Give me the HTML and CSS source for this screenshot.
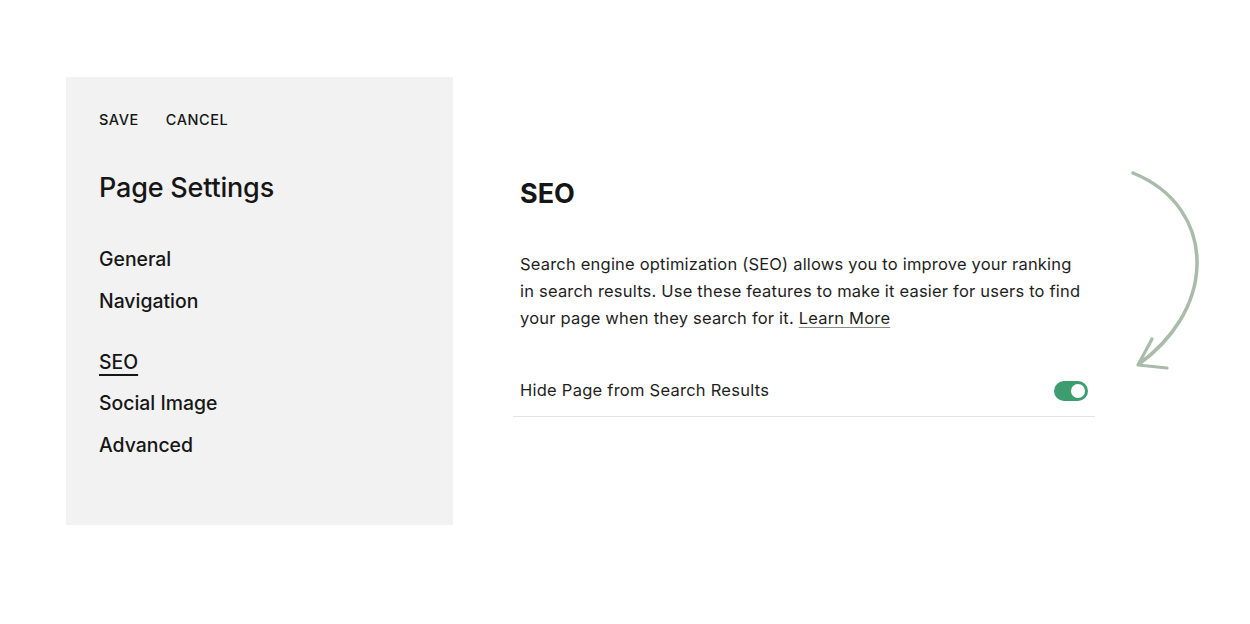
FILE: index.html
```html
<!DOCTYPE html>
<html lang="en">
<head>
<meta charset="utf-8">
<title>Page Settings</title>
<link rel="stylesheet" href="styles.css">
</head>
<body>
<div class="stage">
  <aside class="panel">
    <div class="actions">
      <span class="action">SAVE</span>
      <span class="action">CANCEL</span>
    </div>
    <h1 class="panel-title">Page Settings</h1>
    <nav class="nav">
      <span class="nav-item">General</span>
      <span class="nav-item">Navigation</span>
      <span class="nav-item active group-start">SEO</span>
      <span class="nav-item">Social Image</span>
      <span class="nav-item">Advanced</span>
    </nav>
  </aside>
  <main class="content">
    <h2 class="content-title">SEO</h2>
    <p class="desc">Search engine optimization (SEO) allows you to improve your ranking in search results. Use these features to make it easier for users to find your page when they search for it. <span class="link">Learn More</span></p>
    <div class="row">
      <span class="row-label">Hide Page from Search Results</span>
      <span class="toggle"><span class="knob"></span></span>
    </div>
  </main>
  <svg class="arrow" width="100" height="210" viewBox="1120 165 100 210" fill="none" stroke="#a9bba9" stroke-linecap="round" stroke-linejoin="round">
    <path d="M1133 173 C1175 190 1198 225 1197 265 C1196 305 1172 340 1139 364" stroke-width="3.5"/>
    <path d="M1152 339 L1138 365 L1167 368" stroke-width="3.2"/>
  </svg>
</div>
</body>
</html>
```

FILE: styles.css
```css
* { box-sizing: border-box; }
html, body { margin: 0; padding: 0; background: #ffffff; }
body {
  font-family: Inter, "Liberation Sans", sans-serif;
  color: #161616;
  width: 1250px;
  height: 624px;
  overflow: hidden;
}
.stage {
  position: relative;
  display: flex;
  align-items: flex-start;
  padding: 77px 0 0 66px;
  gap: 60px;
}
.panel {
  width: 387px;
  height: 448px;
  background: #f2f2f2;
  padding: 35px 0 0 33px;
  display: flex;
  flex-direction: column;
}
.actions {
  display: flex;
  gap: 27px;
}
.action {
  font-size: 14.5px;
  line-height: 15px;
  font-weight: 500;
  letter-spacing: 0.55px;
}
.panel-title {
  margin: 44px 0 0;
  font-size: 27px;
  line-height: 33px;
  font-weight: 500;
  letter-spacing: -0.2px;
}
.nav {
  margin-top: 43px;
  display: flex;
  flex-direction: column;
  align-items: flex-start;
  gap: 18px;
}
.nav-item {
  font-size: 19.4px;
  line-height: 24px;
  font-weight: 500;
}
.nav-item.group-start { margin-top: 19px; }
.nav-item.active {
  text-decoration: underline;
  text-decoration-thickness: 2px;
  text-underline-offset: 5px;
}
.nav-item.active + .nav-item { margin-top: -1px; }
.content {
  width: 582px;
  padding-top: 100px;
}
.content-title {
  margin: 0;
  padding-left: 7px;
  font-size: 27px;
  line-height: 33px;
  font-weight: 700;
}
.desc {
  margin: 41px 0 0;
  padding: 0 7px;
  font-size: 16.5px;
  line-height: 27px;
  letter-spacing: 0.2px;
  color: #1e1e1e;
}
.link {
  text-decoration: underline;
  text-decoration-color: #8a8a8a;
  text-decoration-thickness: 1px;
  text-underline-offset: 3px;
}
.row {
  margin-top: 33px;
  display: flex;
  align-items: center;
  justify-content: space-between;
  padding: 12px 7px 12px;
  border-bottom: 1px solid #e4e4e4;
}
.row-label {
  font-size: 16.5px;
  line-height: 27px;
  letter-spacing: 0.25px;
  color: #1e1e1e;
}
.toggle {
  width: 34px;
  height: 20px;
  border-radius: 10px;
  background: #3e9c71;
  display: flex;
  align-items: center;
  justify-content: flex-end;
  padding-right: 3px;
}
.knob {
  width: 14px;
  height: 14px;
  border-radius: 50%;
  background: #ffffff;
}
.arrow {
  position: absolute;
  left: 1120px;
  top: 165px;
}
```
